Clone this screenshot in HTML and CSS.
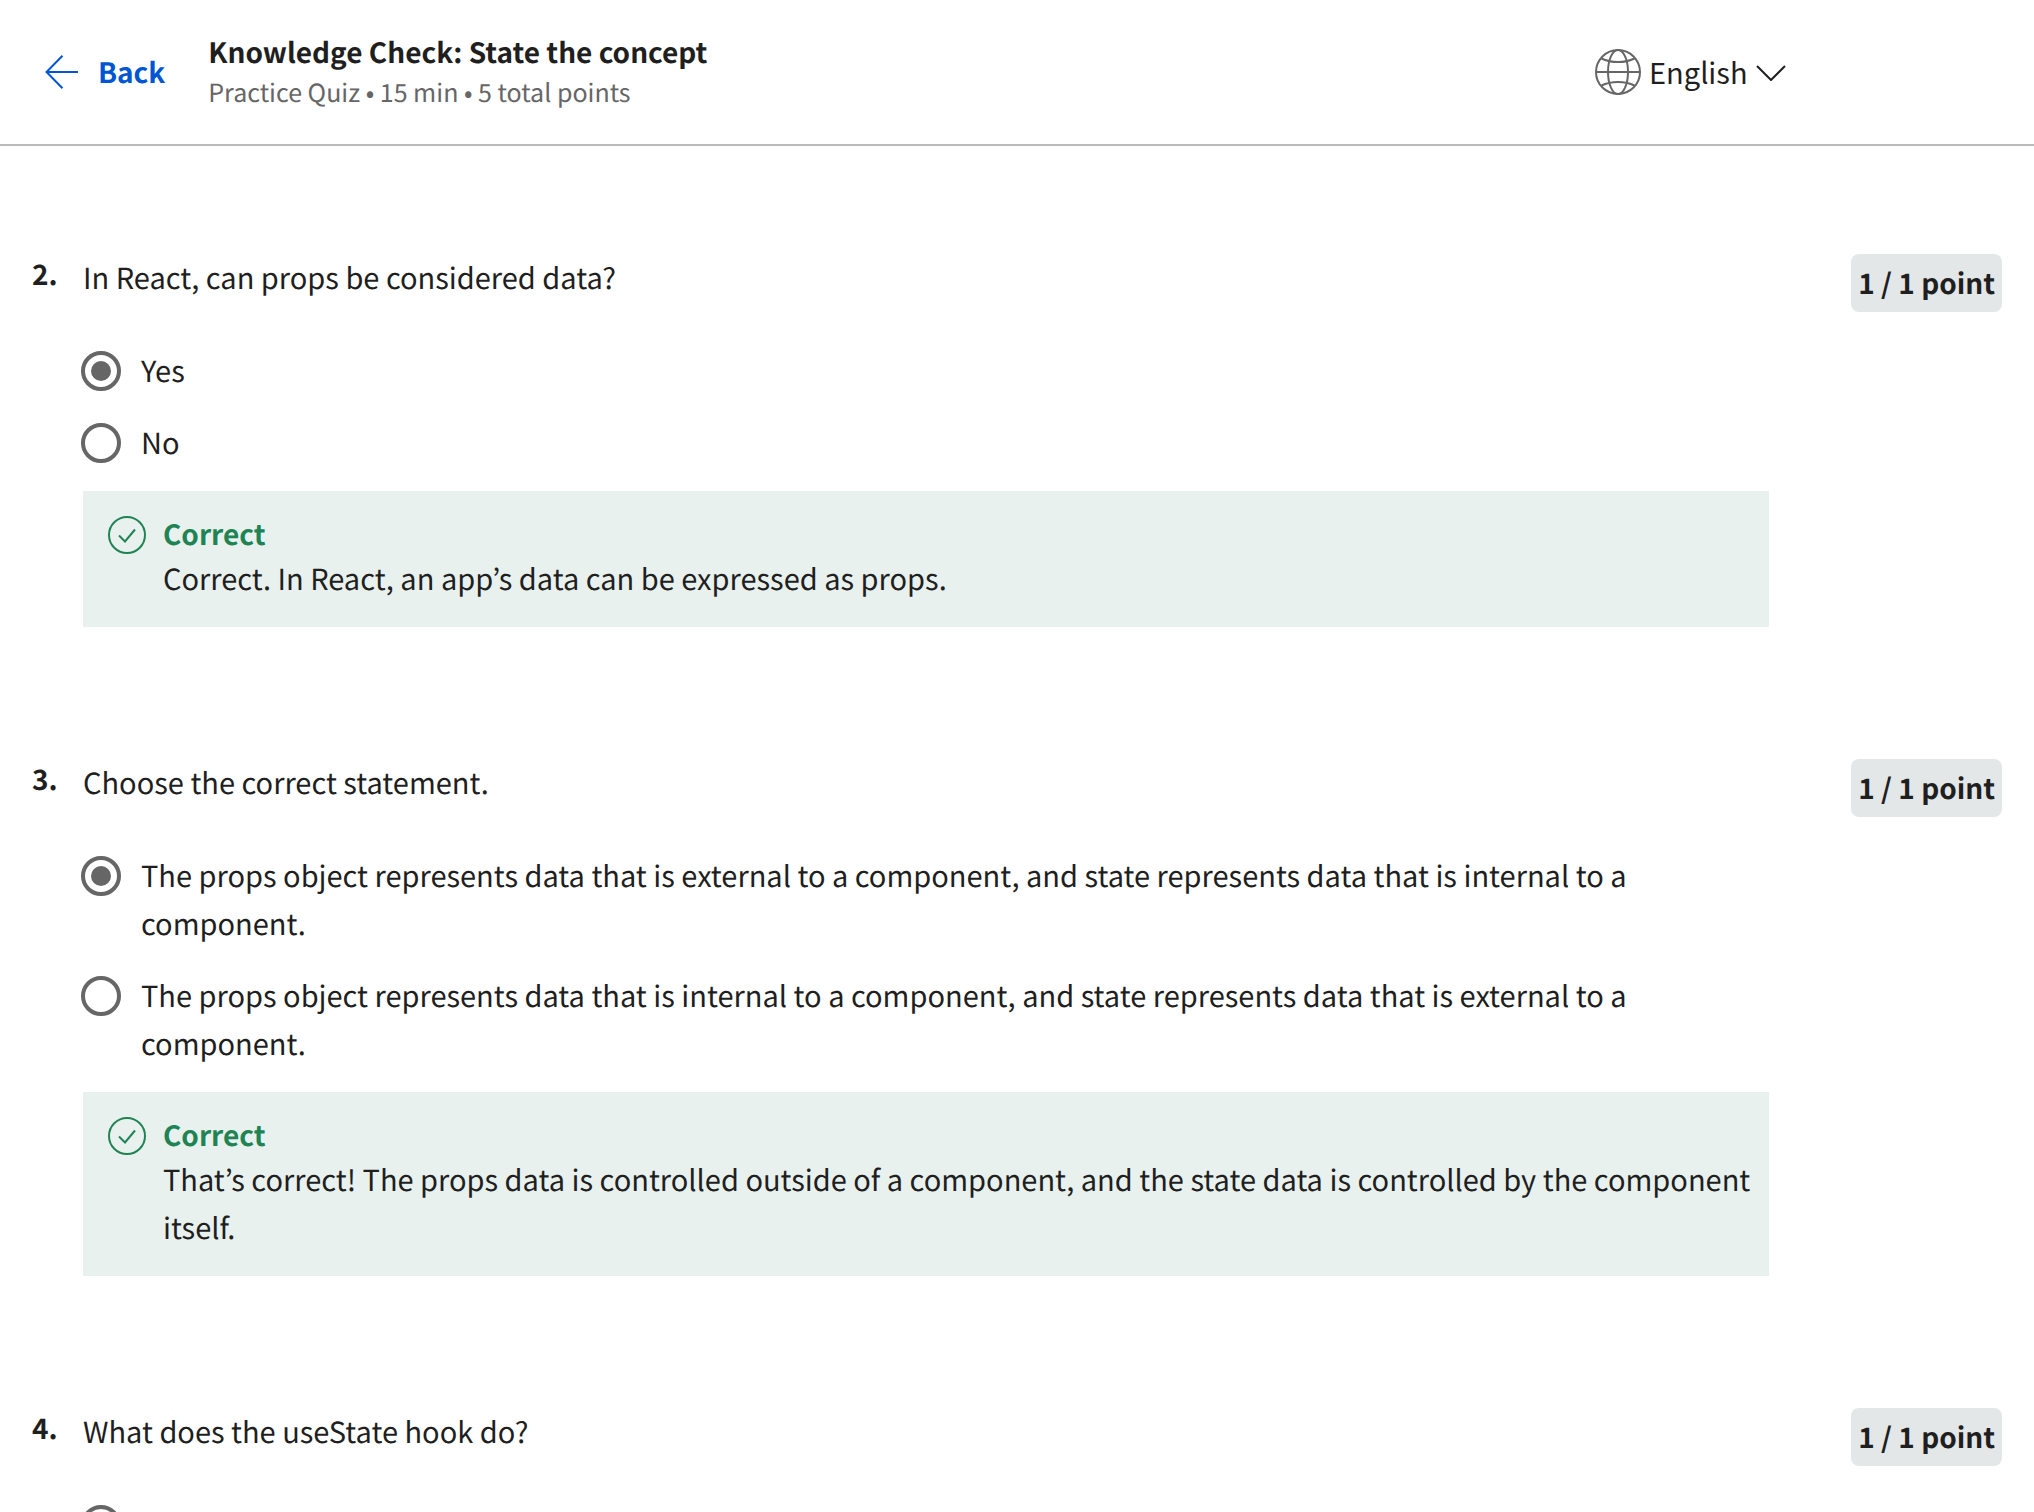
FILE: index.html
```html
<!DOCTYPE html>
<html lang="en">
<head>
  <meta charset="utf-8">
  <meta name="viewport" content="width=device-width, initial-scale=1">
  <title>Knowledge Check: State the concept</title>
  <link rel="stylesheet" href="styles.css">
</head>
<body>
  <div class="app">
    <header class="header">
      <a class="back" href="#">
        <svg class="back-icon" viewBox="0 0 34 34" aria-hidden="true"><path d="M33 17H1.500M17.500 .7L1.500 17L17.500 33.300"/></svg>
        <span>Back</span>
      </a>
      <div class="heading">
        <h1 class="title">Knowledge Check: State the concept</h1>
        <p class="subtitle">Practice Quiz • 15 min • 5 total points</p>
      </div>
      <div class="language">
        <svg class="globe" viewBox="0 0 46 46" aria-hidden="true">
          <circle cx="23" cy="23" r="22"/>
          <ellipse cx="23" cy="23" rx="10" ry="22"/>
          <path d="M1 23H45M6.500 9.500C16 14.300 30 14.300 39.500 9.500M6.500 36.500C16 31.700 30 31.700 39.500 36.500"/>
        </svg>
        <div class="picker">
          <select class="language-select" aria-label="Language"><option>English</option></select>
          <svg class="chevron" viewBox="0 0 30 16" aria-hidden="true"><path d="M1 1L15 15L29 1"/></svg>
        </div>
      </div>
    </header>

    <main class="questions">
      <section class="question">
        <span class="number">2.</span>
        <div class="body">
          <p class="prompt" id="q2">In React, can props be considered data?</p>
          <div class="options" role="radiogroup" aria-labelledby="q2">
            <label class="option"><input class="radio" type="radio" name="q2" checked><span>Yes</span></label>
            <label class="option"><input class="radio" type="radio" name="q2"><span>No</span></label>
          </div>
          <div class="feedback">
            <svg class="check" viewBox="0 0 38 38" aria-hidden="true"><circle cx="19" cy="19" r="18"/><path d="M11 19.500L17 25.500L27 13.500"/></svg>
            <div>
              <p class="verdict">Correct</p>
              <p class="explanation">Correct. In React, an app’s data can be expressed as props.</p>
            </div>
          </div>
        </div>
        <span class="points">1 / 1 point</span>
      </section>

      <section class="question">
        <span class="number">3.</span>
        <div class="body">
          <p class="prompt" id="q3">Choose the correct statement.</p>
          <div class="options" role="radiogroup" aria-labelledby="q3">
            <label class="option"><input class="radio" type="radio" name="q3" checked><span>The props object represents data that is external to a component, and state represents data that is internal to a component.</span></label>
            <label class="option"><input class="radio" type="radio" name="q3"><span>The props object represents data that is internal to a component, and state represents data that is external to a component.</span></label>
          </div>
          <div class="feedback">
            <svg class="check" viewBox="0 0 38 38" aria-hidden="true"><circle cx="19" cy="19" r="18"/><path d="M11 19.500L17 25.500L27 13.500"/></svg>
            <div>
              <p class="verdict">Correct</p>
              <p class="explanation">That’s correct! The props data is controlled outside of a component, and the state data is controlled by the component itself.</p>
            </div>
          </div>
        </div>
        <span class="points">1 / 1 point</span>
      </section>

      <section class="question">
        <span class="number">4.</span>
        <div class="body">
          <p class="prompt" id="q4">What does the useState hook do?</p>
          <div class="options" role="radiogroup" aria-labelledby="q4">
            <div class="option"><input class="radio" type="radio" name="q4" aria-label="First answer"></div>
          </div>
        </div>
        <span class="points">1 / 1 point</span>
      </section>
    </main>
  </div>
</body>
</html>
```
FILE: styles.css
```css
* {
  box-sizing: border-box;
}

body {
  margin: 0;
  background: #fff;
  color: #1f1f1f;
  font-family: "Noto Sans CJK KR", "Noto Sans", sans-serif;
  font-size: 29px;
  line-height: 48px;
  text-rendering: geometricPrecision;
}

p,
h1 {
  margin: 0;
}

.app {
  display: flex;
  flex-direction: column;
  height: 100vh;
}

/* Header */

.header {
  display: flex;
  flex: none;
  align-items: center;
  height: 146px;
  padding: 0 248px 0 45px;
  border-bottom: 2px solid #bbb;
}

.back {
  display: flex;
  align-items: center;
  gap: 19px;
  color: #0056d2;
  font-size: 28px;
  font-weight: 600;
  text-decoration: none;
}

.back-icon {
  width: 34px;
  height: 34px;
  fill: none;
  stroke: currentColor;
  stroke-width: 2;
}

.heading {
  margin-left: 43px;
}

.title {
  font-size: 28px;
  font-weight: 600;
  line-height: 40px;
}

.subtitle {
  color: #666;
  font-size: 25px;
  line-height: 40px;
}

.language {
  display: flex;
  align-items: center;
  gap: 8px;
  margin-left: auto;
}

.globe {
  width: 46px;
  height: 46px;
  fill: none;
  stroke: #666;
  stroke-width: 2;
}

.picker {
  position: relative;
  display: flex;
  padding-bottom: 2px;
}

.language-select {
  appearance: none;
  padding: 0 38px 0 0;
  border: 0;
  background: none;
  color: inherit;
  font: inherit;
  line-height: 48px;
}

.chevron {
  position: absolute;
  top: 18px;
  right: 0;
  width: 30px;
  height: 16px;
  fill: none;
  stroke: #1f1f1f;
  stroke-width: 2;
  pointer-events: none;
}

/* Questions */

.questions {
  display: flex;
  flex: 1;
  flex-direction: column;
  gap: 131px;
  min-height: 0;
  padding: 107px 32px 0;
  overflow-y: auto;
  scrollbar-width: none;
}

.question {
  display: grid;
  grid-template-columns: 51px 1fr auto;
  align-items: start;
}

.number {
  font-size: 28px;
  font-weight: 600;
  line-height: 42px;
}

.body {
  margin-right: 82px;
}

.options {
  display: flex;
  flex-direction: column;
  gap: 24px;
  margin-top: 45px;
}

.option {
  display: flex;
  align-items: flex-start;
  gap: 20px;
  padding-right: 24px;
}

.radio {
  display: grid;
  flex: none;
  place-content: center;
  width: 40px;
  height: 40px;
  margin: 5px 0 3px -2px;
  appearance: none;
  border: 4px solid #666;
  border-radius: 50%;
}

.radio:checked::before {
  width: 20px;
  height: 20px;
  border-radius: 50%;
  background: #666;
  content: "";
}

.feedback {
  display: flex;
  align-items: flex-start;
  gap: 17px;
  margin-top: 25px;
  padding: 23px 8px 25px 25px;
  background: #e8f1ee;
}

.check {
  flex: none;
  width: 38px;
  height: 38px;
  margin-top: 2px;
  fill: none;
  stroke: #1f8354;
  stroke-width: 2;
}

.verdict {
  color: #1f8354;
  font-size: 28px;
  font-weight: 600;
  line-height: 40px;
}

.points {
  margin-top: 1px;
  padding: 5px 7px;
  border-radius: 8px;
  background: #e3e7e8;
  font-size: 28px;
  font-weight: 600;
}
```
